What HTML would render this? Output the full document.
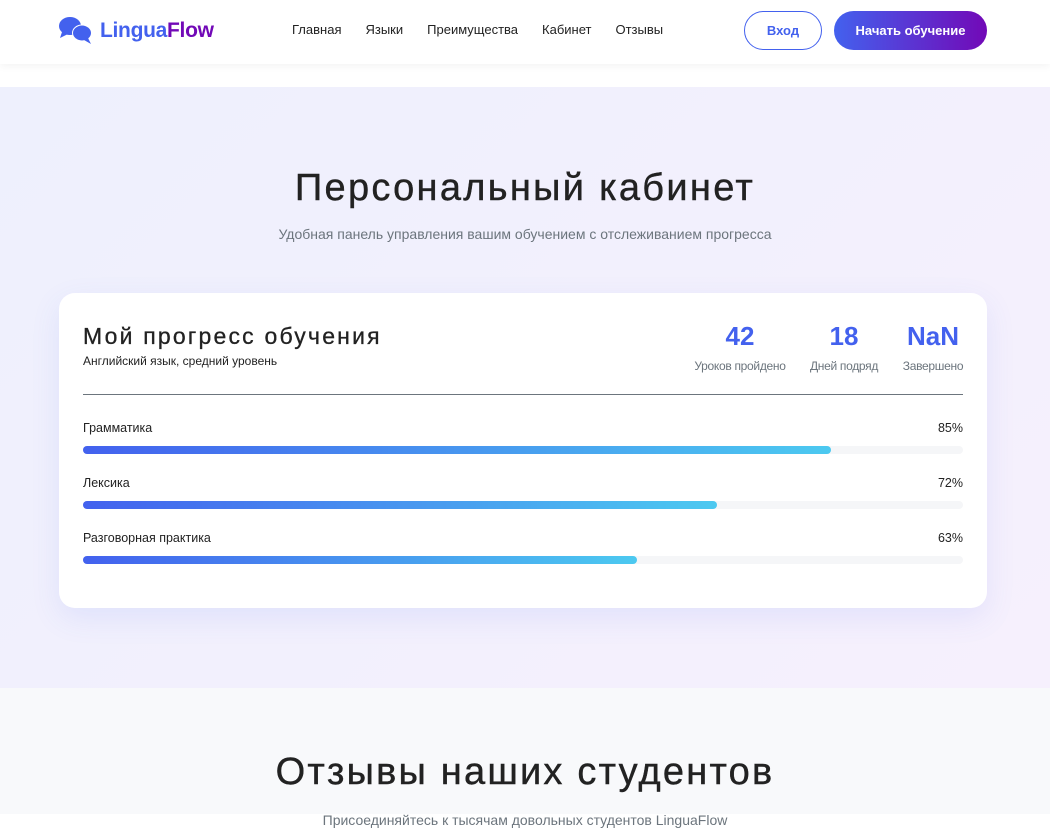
<!DOCTYPE html>
<html><head><meta charset="utf-8"><style>
*{margin:0;padding:0;box-sizing:border-box}
body{width:1050px;height:814px;overflow:hidden;font-family:"Liberation Sans",sans-serif;background:#fff;color:#222;position:relative}
.hdr{position:absolute;top:0;left:0;width:1050px;height:64px;background:#fff;box-shadow:0 2px 8px rgba(0,0,0,.05)}
.logo{position:absolute;left:58px;top:16px;display:flex;align-items:center;font-weight:bold;font-size:21px;letter-spacing:-.3px}
.nav{position:absolute;top:22px;left:292px;font-size:13px;color:#222;white-space:nowrap}
.nav span{margin-right:24px}
.btn1{position:absolute;left:744px;top:11px;width:78px;height:39px;border:1px solid #4361ee;border-radius:20px;color:#4361ee;font-size:13px;font-weight:bold;text-align:center;line-height:37px}
.btn2{position:absolute;left:834px;top:11px;width:153px;height:39px;border-radius:20px;background:linear-gradient(90deg,#4361ee,#7209b7);color:#fff;font-size:13px;font-weight:bold;text-align:center;line-height:39px}
.sec{position:absolute;top:87px;left:0;width:1050px;height:601px;background:linear-gradient(135deg,#eef0fd,#f6f0fd)}
h1{position:absolute;top:167px;width:1050px;text-align:center;font-size:38px;font-weight:normal;color:#222;letter-spacing:2.3px;white-space:nowrap;-webkit-text-stroke:.4px #222}
.sub{position:absolute;top:226px;width:1050px;text-align:center;font-size:14px;color:#6c757d}
.card{position:absolute;left:59px;top:293px;width:928px;height:315px;background:#fff;border-radius:16px;box-shadow:0 10px 30px rgba(67,97,238,.1)}
.ct{position:absolute;left:24px;top:30px;font-size:23px;font-weight:normal;letter-spacing:2.2px;white-space:nowrap;-webkit-text-stroke:.3px #222}
.cs{position:absolute;left:24px;top:61px;font-size:12px}
.st{position:absolute;top:28px;text-align:center;white-space:nowrap}
.st b{display:block;font-size:26px;color:#4361ee;font-weight:900}
.st i{display:block;font-style:normal;font-size:12px;color:#6c757d;margin-top:7px;letter-spacing:-.3px}
.hr{position:absolute;left:24px;top:101px;width:880px;height:1px;background:#6c757d}
.lab{position:absolute;left:24px;font-size:12.5px;width:880px}
.lab span{float:right}
.bar{position:absolute;left:24px;width:880px;height:8px;background:#f5f6f8;border-radius:4px}
.bar div{height:8px;border-radius:4px;background:linear-gradient(90deg,#4361ee,#4cc9f0)}
.sec2{position:absolute;top:688px;left:0;width:1050px;height:126px;background:#f8f9fb}
h2{position:absolute;top:751px;width:1050px;text-align:center;font-size:38px;font-weight:normal;letter-spacing:2.2px;white-space:nowrap;-webkit-text-stroke:.4px #222}
.sub2{position:absolute;top:812px;width:1050px;text-align:center;font-size:14px;color:#6c757d}
</style></head><body>
<div class="hdr">
<div class="logo"><svg width="36" height="30" viewBox="0 0 36 30"><ellipse cx="12" cy="10" rx="11" ry="9" fill="#4361ee"/><path d="M4 16 L2 22 L10 18Z" fill="#4361ee"/><ellipse cx="24" cy="17" rx="10" ry="8.5" fill="#fff"/><ellipse cx="24" cy="17" rx="9" ry="7.5" fill="#4361ee"/><path d="M30 22 L33 28 L26 24Z" fill="#4361ee"/></svg><span style="color:#4361ee;margin-left:6px">Lingua</span><span style="color:#7209b7">Flow</span></div>
<div class="nav"><span>Главная</span><span>Языки</span><span>Преимущества</span><span>Кабинет</span><span>Отзывы</span></div>
<div class="btn1">Вход</div><div class="btn2">Начать обучение</div>
</div>
<div class="sec"></div>
<h1>Персональный кабинет</h1>
<div class="sub">Удобная панель управления вашим обучением с отслеживанием прогресса</div>
<div class="card">
<div class="ct">Мой прогресс обучения</div>
<div class="cs">Английский язык, средний уровень</div>
<div class="st" style="left:635px;width:92px"><b>42</b><i>Уроков пройдено</i></div>
<div class="st" style="left:748px;width:74px"><b>18</b><i>Дней подряд</i></div>
<div class="st" style="left:842px;width:64px"><b>NaN</b><i>Завершено</i></div>
<div class="hr"></div>
<div class="lab" style="top:128px">Грамматика<span>85%</span></div>
<div class="bar" style="top:153px"><div style="width:85%"></div></div>
<div class="lab" style="top:183px">Лексика<span>72%</span></div>
<div class="bar" style="top:208px"><div style="width:72%"></div></div>
<div class="lab" style="top:238px">Разговорная практика<span>63%</span></div>
<div class="bar" style="top:263px"><div style="width:63%"></div></div>
</div>
<div class="sec2"></div>
<h2>Отзывы наших студентов</h2>
<div class="sub2">Присоединяйтесь к тысячам довольных студентов LinguaFlow</div>
</body></html>
